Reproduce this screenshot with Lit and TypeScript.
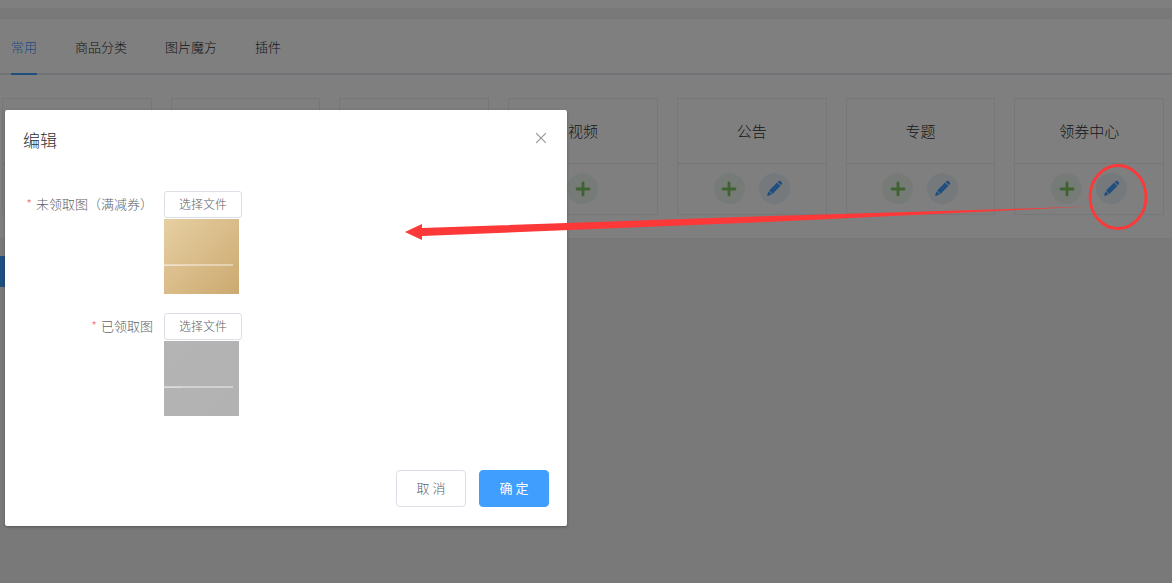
import { LitElement, html, css, svg, nothing } from "lit";
import { customElement, property, state } from "lit/decorators.js";
import { classMap } from "lit/directives/class-map.js";

interface Widget {
  name: string;
  editable: boolean;
}

const TABS = ["常用", "商品分类", "图片魔方", "插件"];

const WIDGETS: Widget[] = [
  { name: "", editable: false },
  { name: "", editable: false },
  { name: "", editable: false },
  { name: "视频", editable: false },
  { name: "公告", editable: true },
  { name: "专题", editable: true },
  { name: "领券中心", editable: true },
];

const plusIcon = svg`<path d="M9 3V15M3 9H15" stroke="currentColor" stroke-width="2.800" stroke-linecap="round" fill="none" />`;
const pencilIcon = svg`<g fill="currentColor" transform="rotate(45 9 9)">
  <path d="M6.500 0.800Q6.500 -1.200 9 -1.200Q11.500 -1.200 11.500 0.800V1.600H6.500Z" />
  <path d="M6.500 2.600H11.500V14.600H6.500Z" />
  <path d="M6.700 15.400H11.300L9.700 19.400H8.300Z" />
</g>`;

@customElement("widget-card")
class WidgetCard extends LitElement {
  @property() name = "";
  @property({ type: Boolean }) editable = false;

  static styles = css`
    :host {
      display: block;
      box-sizing: border-box;
      height: 117px;
      border: 1px solid #ebeef5;
    }
    .title {
      box-sizing: border-box;
      margin: 0;
      height: 65px;
      border-bottom: 1px dotted #dedede;
      font-size: 15px;
      font-weight: 300;
      line-height: 64px;
      text-align: center;
      color: #303133;
    }
    .actions {
      display: flex;
      justify-content: center;
      gap: 14px;
      padding-top: 9px;
    }
    .action {
      display: grid;
      place-items: center;
      width: 31px;
      height: 31px;
      padding: 0;
      border: 0;
      border-radius: 50%;
    }
    .add {
      color: #7cc460;
      background: #eef6ee;
    }
    .edit {
      color: #409eff;
      background: #ecf2f9;
    }
    .icon {
      display: block;
      overflow: visible;
    }
  `;

  render() {
    return html`
      <h3 class="title">${this.name}</h3>
      <div class="actions">
        <button class="action add" aria-label="添加">
          <svg class="icon" width="18" height="18" viewBox="0 0 18 18">${plusIcon}</svg>
        </button>
        ${this.editable
          ? html`<button class="action edit" aria-label="编辑">
              <svg class="icon" width="17" height="17" viewBox="0 0 18 18">${pencilIcon}</svg>
            </button>`
          : nothing}
      </div>
    `;
  }
}

@customElement("edit-dialog")
class EditDialog extends LitElement {
  static styles = css`
    :host {
      display: block;
      box-sizing: border-box;
      padding: 18px 18px 19px;
      border-radius: 2px;
      background: #fff;
      box-shadow: 0 1px 3px rgba(0, 0, 0, 0.3);
      color: #606266;
    }
    .head {
      display: flex;
      justify-content: space-between;
      align-items: flex-start;
      height: 24px;
    }
    .title {
      margin: 0;
      font-size: 17px;
      font-weight: 300;
      line-height: 24px;
      color: #303133;
    }
    .close {
      padding: 5px 3px;
      border: 0;
      background: none;
      color: #909399;
    }
    .icon {
      display: block;
    }
    .body {
      display: grid;
      gap: 19px;
      padding-top: 39px;
    }
    .row {
      display: grid;
      grid-template-columns: 130px 1fr;
      gap: 11px;
    }
    .label {
      font-size: 13px;
      font-weight: 300;
      line-height: 25px;
      text-align: right;
      white-space: nowrap;
    }
    .label::before {
      content: "*";
      margin-right: 4px;
      color: #f56c6c;
    }
    button {
      font-family: inherit;
      font-weight: 300;
      color: inherit;
    }
    .pick {
      display: block;
      box-sizing: border-box;
      width: 78px;
      height: 27px;
      padding: 0 0 2px;
      border: 1px solid #dcdfe6;
      border-radius: 3px;
      background: #fff;
      font-size: 12px;
    }
    .thumb {
      display: block;
      margin-top: 1px;
    }
    .foot {
      display: flex;
      justify-content: flex-end;
      gap: 13px;
      padding-top: 54px;
    }
    .btn {
      box-sizing: border-box;
      min-width: 70px;
      height: 37px;
      padding: 0 18px 2px;
      border: 1px solid #dcdfe6;
      border-radius: 4px;
      background: #fff;
      font-size: 13px;
      white-space: pre;
    }
    .primary {
      border-color: #409eff;
      background: #409eff;
      color: #fff;
      font-weight: 400;
    }
  `;

  private row(id: string, label: string, from: string, to: string) {
    const fill = `${id}-fill`;
    return html`
      <div class="row">
        <label class="label" for=${id}>${label}</label>
        <div>
          <button class="pick" id=${id}>选择文件</button>
          <svg class="thumb" width="75" height="75" viewBox="0 0 75 75">
            <defs>
              <linearGradient id=${fill} x1="0" y1="0" x2="1" y2="1">
                <stop offset="0" stop-color=${from} />
                <stop offset="1" stop-color=${to} />
              </linearGradient>
            </defs>
            <rect width="75" height="75" fill="url(#${fill})" />
            <path d="M0 46H69" stroke="#fff" stroke-opacity=".4" stroke-width="2" />
            <path d="M0 46.500H18M27 46.500H29" stroke="#fff" stroke-opacity=".25" />
          </svg>
        </div>
      </div>
    `;
  }

  render() {
    return html`
      <div class="head">
        <h2 class="title">编辑</h2>
        <button class="close" aria-label="关闭">
          <svg class="icon" width="10" height="10" viewBox="0 0 10 10">
            <path d="M0 0L10 10M10 0L0 10" stroke="currentColor" stroke-width="1.100" />
          </svg>
        </button>
      </div>
      <div class="body">
        ${this.row("unclaimed", "未领取图（满减券）", "#e6cfa2", "#cca970")}
        ${this.row("claimed", "已领取图", "#b4b4b4", "#b2b2b2")}
      </div>
      <div class="foot">
        <button class="btn">取 消</button>
        <button class="btn primary">确 定</button>
      </div>
    `;
  }
}

@customElement("app-root")
class AppRoot extends LitElement {
  @state() private active = 0;

  static styles = css`
    :host {
      display: block;
      position: relative;
      min-height: 100vh;
      overflow: hidden;
      background: #f2f2f2;
      font-family: "Noto Sans CJK SC", sans-serif;
    }
    .strip {
      height: 8px;
      margin-bottom: 10px;
      background: #fff;
    }
    .panel {
      border: solid #ebeef5;
      border-width: 1px 0;
      background: #fff;
    }
    .tabs {
      display: flex;
      gap: 38px;
      padding: 0 11px;
      border-bottom: 2px solid #e4e7ed;
    }
    .tab {
      height: 56px;
      margin-bottom: -2px;
      padding: 0;
      border: 0;
      border-bottom: 2px solid transparent;
      background: none;
      font-family: inherit;
      font-size: 13px;
      font-weight: 300;
      color: #303133;
    }
    .active {
      border-color: #409eff;
      color: #409eff;
    }
    .cards {
      display: grid;
      grid-template-columns: repeat(7, 1fr);
      gap: 19px;
      padding: 23px 8px 23px 2px;
    }
    .block {
      width: 60px;
      height: 31px;
      margin-top: 17px;
      background: #409eff;
    }
    .mask {
      position: absolute;
      inset: 0;
      background: rgba(0, 0, 0, 0.5);
    }
    .dialog {
      position: absolute;
      left: 5px;
      top: 110px;
      width: 562px;
    }
    .note {
      position: absolute;
      left: 405px;
      top: 160px;
      pointer-events: none;
    }
  `;

  render() {
    return html`
      <div class="strip"></div>
      <section class="panel">
        <nav class="tabs">
          ${TABS.map(
            (t, i) => html`<button
              class=${classMap({ tab: true, active: i === this.active })}
              @click=${() => (this.active = i)}
            >${t}</button>`
          )}
        </nav>
        <div class="cards">
          ${WIDGETS.map((w) => html`<widget-card .name=${w.name} .editable=${w.editable}></widget-card>`)}
        </div>
      </section>
      <div class="block"></div>
      <div class="mask"></div>
      <edit-dialog class="dialog" role="dialog" aria-label="编辑"></edit-dialog>
      <svg class="note" width="745" height="85" viewBox="0 0 745 85" aria-hidden="true">
        <path d="M0 72L17 64V68L350 56.500L685 46.500L350 62.500L17 76V80Z" fill="#fd3838" />
        <ellipse cx="713" cy="37" rx="28" ry="31.500" fill="none" stroke="#fd3838" stroke-width="2.800" />
      </svg>
    `;
  }
}
